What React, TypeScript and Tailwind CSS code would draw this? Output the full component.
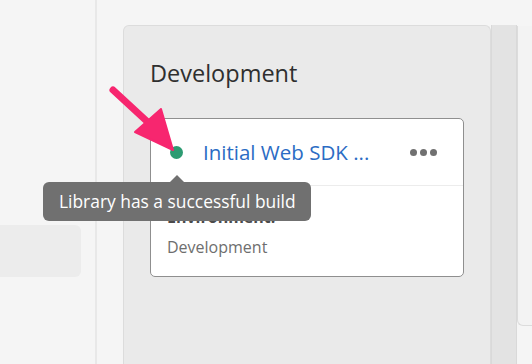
import React from "react";

const font = { fontFamily: '"Open Sans", "Noto Sans", sans-serif' };

/** 粉紅色指示箭頭（覆蓋在畫面上） */
function PointerArrow() {
  return (
    <svg className="absolute left-0 top-0 pointer-events-none" width="532" height="364">
      <line x1="113" y1="90" x2="152" y2="126" stroke="#f7266f" strokeWidth="7" strokeLinecap="round" />
      <polygon points="161,109 135,132 173,150" fill="#f7266f" strokeLinejoin="round" stroke="#f7266f" strokeWidth="2" />
    </svg>
  );
}

/** 狀態提示 */
function Tooltip() {
  return (
    <div className="absolute left-[43px] top-[182px] flex flex-col">
      <div className="absolute left-[127px] -top-[7px] w-0 h-0 border-l-[7px] border-r-[7px] border-b-[7px] border-l-transparent border-r-transparent border-b-[#707070]" />
      <div className="h-[39px] w-[268px] rounded-md bg-[#707070] text-white text-[17.4px] pl-[16px] flex items-center">
        Library has a successful build
      </div>
    </div>
  );
}

function LibraryCard() {
  return (
    <div className="w-[314px] h-[159px] bg-white border border-[#8f8f8f] rounded-[5px] flex flex-col">
      <div className="h-[67px] flex items-center border-b border-[#ececec] pl-[19px] pr-[26px]">
        <span className="w-[13px] h-[13px] rounded-full bg-[#2d9b72]" />
        <span className="ml-[20px] text-[20.5px] text-[#2b6cc4] flex-1">Initial Web SDK ...</span>
        <span className="flex gap-[3px]">
          <span className="w-[7px] h-[7px] rounded-full bg-[#707070]" />
          <span className="w-[7px] h-[7px] rounded-full bg-[#707070]" />
          <span className="w-[7px] h-[7px] rounded-full bg-[#707070]" />
        </span>
      </div>
      <div className="pl-[16px] pt-[16px] text-[16px] leading-[30px]">
        <div className="font-bold text-[#4b4b4b]">Environment:</div>
        <div className="text-[#6e6e6e]">Development</div>
      </div>
    </div>
  );
}

export default function App() {
  return (
    <div className="relative w-[532px] h-[364px] overflow-hidden bg-[#f5f5f5] flex" style={font}>
      {/* 左側欄 */}
      <aside className="w-[97px] shrink-0 border-r-2 border-[#e8e8e8] pt-[225px]">
        <div className="w-[81px] h-[52px] bg-[#ececec] rounded-r-md" />
      </aside>

      {/* 環境欄位 */}
      <main className="flex-1 flex pt-[25px] pl-[26px]">
        <section className="w-[368px] shrink-0 bg-[#eaeaea] border border-[#dcdcdc] border-b-0 rounded-t-[6px] pl-[26px] pt-[31px]">
          <h2 className="text-[23.5px] leading-[32px] text-[#2f2f2f] mb-[29px]">Development</h2>
          <LibraryCard />
        </section>
        <div className="w-[26px] shrink-0 bg-[#e3e3e3] border-x border-[#d9d9d9]" />
        <section className="flex-1 h-[300px] mt-[1px] bg-[#f3f3f3] border-l border-b border-[#dcdcdc] rounded-bl-[6px]" />
      </main>

      <Tooltip />
      <PointerArrow />
    </div>
  );
}
